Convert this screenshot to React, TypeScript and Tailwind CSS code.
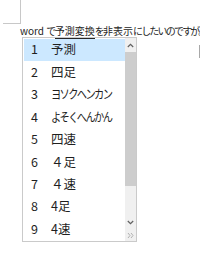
import React from "react";

const rows: { t: string; kana?: boolean }[] = [
  { t: "予測" },
  { t: "四足" },
  { t: "ヨソクヘンカン", kana: true },
  { t: "よそくへんかん", kana: true },
  { t: "四速" },
  { t: "４足" },
  { t: "４速" },
  { t: "4足" },
  { t: "4速" },
];

export default function App() {
  return (
    <div className="relative w-[200px] h-[260px] bg-white overflow-hidden font-['Noto_Sans_CJK_JP',sans-serif] text-[#1f1f1f]">
      <div className="ml-[3px] w-[18px] h-[24px] border-r border-b border-[#c8c8c8]" />
      <div className="pl-[20px] h-[13px] text-[10px] leading-[13px] whitespace-nowrap text-[#262626]">
        word <span className="tracking-[-1.5px]">で</span>
        <span className="border-b border-[#262626]">予測変換</span>
        <span className="tracking-[-1.8px]">を</span>非表示
        <span className="tracking-[-1.8px]">にしたいのですが。</span>
      </div>
      <div className="absolute left-[199px] top-[45px] w-px h-[13px] bg-[#a8a8a8]" />
      <div className="ml-[22px] w-[115px] h-[205px] border border-[#cacaca] bg-white flex">
        <div className="flex-1 flex flex-col py-[0.5px] pl-px">
          {rows.map((r, i) => (
            <div
              key={i}
              className={`flex-1 flex items-center text-[12.5px] whitespace-nowrap ${i === 0 ? "bg-[#cce8ff]" : ""}`}
            >
              <span className="w-[27px] pl-[7px] shrink-0">{i + 1}</span>
              {r.kana ? (
                <span className="inline-block origin-left scale-x-[0.82] tracking-[-2px]">{r.t}</span>
              ) : (
                <span>{r.t}</span>
              )}
            </div>
          ))}
        </div>
        <div className="w-[12px] flex flex-col bg-[#f0f0f0]">
          <div className="h-[14px] flex items-center justify-center">
            <svg width="7" height="5" viewBox="0 0 7 5">
              <path d="M0.8 4 L3.5 1.3 L6.2 4" fill="none" stroke="#606060" strokeWidth="1.2" />
            </svg>
          </div>
          <div className="h-[134px] bg-[#cdcdcd]" />
          <div className="flex-1" />
          <div className="h-[13px] flex items-center justify-center">
            <svg width="7" height="5" viewBox="0 0 7 5">
              <path d="M0.8 1 L3.5 3.7 L6.2 1" fill="none" stroke="#606060" strokeWidth="1.2" />
            </svg>
          </div>
          <div className="h-[12px] flex items-center justify-center">
            <svg width="7" height="7" viewBox="0 0 7 7">
              <path d="M1 1 L3 3.5 L1 6 M4 1 L6 3.5 L4 6" fill="none" stroke="#b0b0b0" strokeWidth="1" />
            </svg>
          </div>
        </div>
      </div>
    </div>
  );
}
